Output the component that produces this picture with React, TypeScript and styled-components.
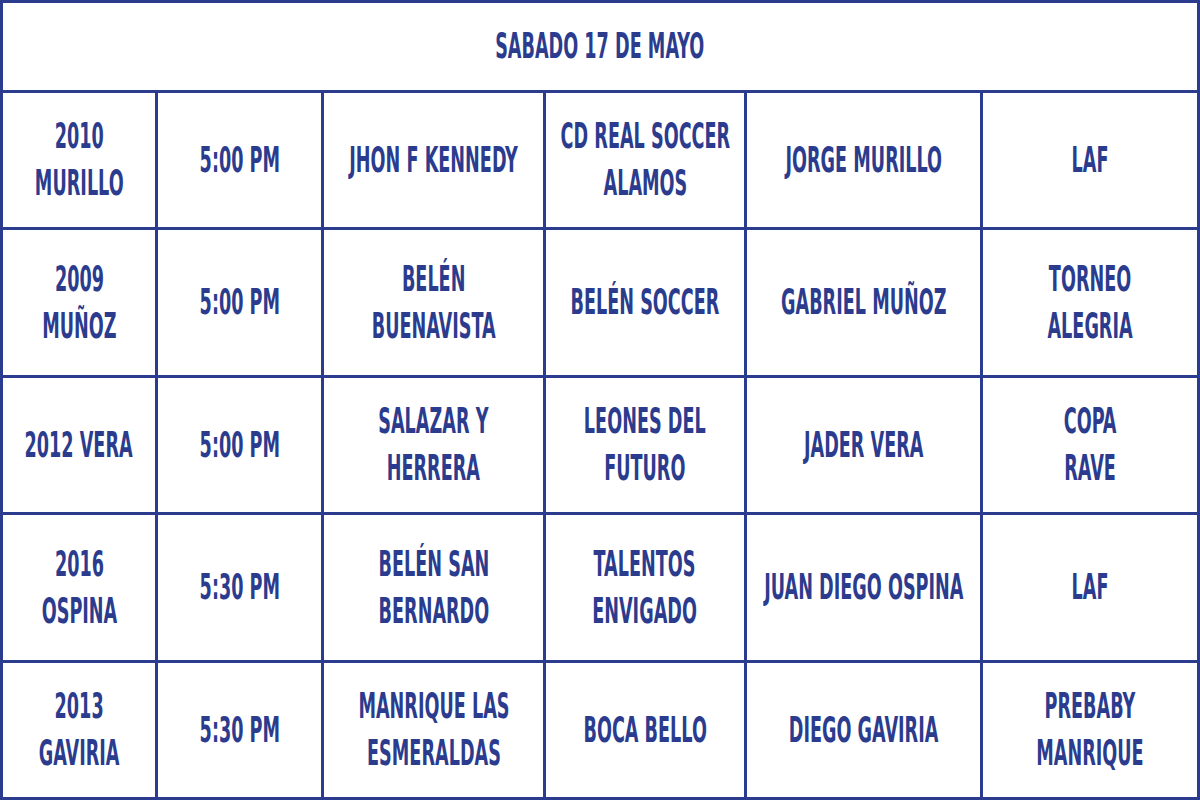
import styled, { createGlobalStyle } from "styled-components";

const Global = createGlobalStyle`
  html, body {
    margin: 0;
    padding: 0;
    background: #ffffff;
  }
`;

const Table = styled.table`
  width: 1200px;
  height: 800px;
  border-collapse: collapse;
  table-layout: fixed;
  font-family: "DejaVu Sans Condensed", "Liberation Sans", sans-serif;
  color: #2b3c8e;
`;

const Row = styled.tr<{ $h: number }>`
  height: ${(p) => p.$h}px;
`;

const Cell = styled.td`
  border: 3px solid #2b3c8e;
  text-align: center;
  vertical-align: middle;
  padding: 0;
`;

const Center = styled.div`
  display: flex;
  justify-content: center;
  align-items: center;
`;

const Label = styled.span`
  display: block;
  flex-shrink: 0;
  white-space: nowrap;
  text-align: center;
  font-size: 35px;
  font-weight: 700;
  line-height: 47px;
  transform: scaleX(0.56);
  transform-origin: center;
`;

const widths = [155, 166, 222, 201, 236, 217];

type Match = {
  cat: string[];
  time: string;
  home: string[];
  away: string[];
  referee: string[];
  event: string[];
  h: number;
};

const matches: Match[] = [
  { cat: ["2010", "MURILLO"], time: "5:00 PM", home: ["JHON F KENNEDY"], away: ["CD REAL SOCCER", "ALAMOS"], referee: ["JORGE MURILLO"], event: ["LAF"], h: 137 },
  { cat: ["2009", "MUÑOZ"], time: "5:00 PM", home: ["BELÉN", "BUENAVISTA"], away: ["BELÉN SOCCER"], referee: ["GABRIEL MUÑOZ"], event: ["TORNEO", "ALEGRIA"], h: 148 },
  { cat: ["2012 VERA"], time: "5:00 PM", home: ["SALAZAR Y", "HERRERA"], away: ["LEONES DEL", "FUTURO"], referee: ["JADER VERA"], event: ["COPA", "RAVE"], h: 137 },
  { cat: ["2016", "OSPINA"], time: "5:30 PM", home: ["BELÉN SAN", "BERNARDO"], away: ["TALENTOS", "ENVIGADO"], referee: ["JUAN DIEGO OSPINA"], event: ["LAF"], h: 148 },
  { cat: ["2013", "GAVIRIA"], time: "5:30 PM", home: ["MANRIQUE LAS", "ESMERALDAS"], away: ["BOCA BELLO"], referee: ["DIEGO GAVIRIA"], event: ["PREBABY", "MANRIQUE"], h: 137 },
];

function Text({ lines }: { lines: string[] }) {
  return (
    <Center>
      <Label>
        {lines.map((l, i) => (
          <span key={i}>
            {i > 0 && <br />}
            {l}
          </span>
        ))}
      </Label>
    </Center>
  );
}

export default function App() {
  return (
    <>
      <Global />
      <Table>
        <colgroup>
          {widths.map((w, i) => (
            <col key={i} style={{ width: w }} />
          ))}
        </colgroup>
        <tbody>
          <Row $h={90}>
            <Cell colSpan={6}>
              <Text lines={["SABADO 17 DE MAYO"]} />
            </Cell>
          </Row>
          {matches.map((m, i) => (
            <Row key={i} $h={m.h}>
              <Cell><Text lines={m.cat} /></Cell>
              <Cell><Text lines={[m.time]} /></Cell>
              <Cell><Text lines={m.home} /></Cell>
              <Cell><Text lines={m.away} /></Cell>
              <Cell><Text lines={m.referee} /></Cell>
              <Cell><Text lines={m.event} /></Cell>
            </Row>
          ))}
        </tbody>
      </Table>
    </>
  );
}
